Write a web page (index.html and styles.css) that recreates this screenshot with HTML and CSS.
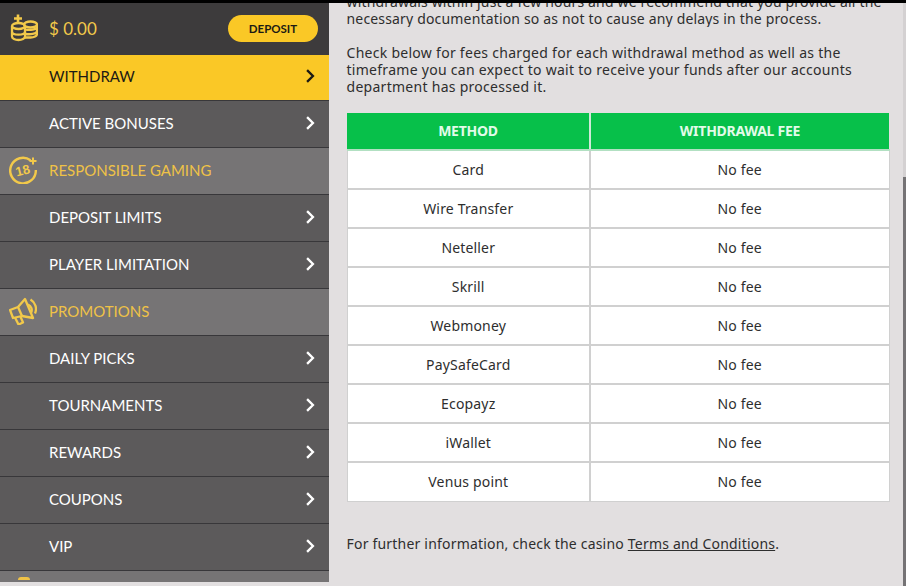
FILE: index.html
```html
<!DOCTYPE html>
<html lang="en">
<head>
<meta charset="utf-8">
<title>Withdraw</title>
<link rel="stylesheet" href="styles.css">
</head>
<body>
<div class="topbar"></div>
<div class="app">
  <aside class="sidebar">
    <div class="balance">
      <svg class="icon" viewBox="0 0 28 28" fill="none" stroke="#f2c94a" stroke-width="2.300"><path d="M4 4.500h8M8 .5v8" stroke-width="2.600"/><ellipse cx="8.500" cy="12" rx="6.500" ry="3"/><path d="M2 12v10.500c0 2 3 3.500 6.500 3.500s6.500-1.500 6.500-3.500V12M2 17.500c0 2 3 3.200 6.500 3.200s6.500-1.200 6.500-3.200"/><ellipse cx="20.500" cy="10.500" rx="6.500" ry="3"/><path d="M27 10.500V20c0 2-3 3.500-6.500 3.500H15M15.500 15.700c4 .6 11.500.3 11.500-3M15.500 20c4 .6 11.500.3 11.500-3"/></svg>
      <span class="amount">$ 0.00</span>
      <button class="deposit">DEPOSIT</button>
    </div>
    <a class="item active">WITHDRAW<svg class="chev" viewBox="0 0 8 12"><path d="M1.500 1l5 5-5 5"/></svg></a>
    <a class="item">ACTIVE BONUSES<svg class="chev" viewBox="0 0 8 12"><path d="M1.500 1l5 5-5 5"/></svg></a>
    <div class="section">
      <svg class="icon" viewBox="0 0 28 28" fill="none" stroke="#f2c94a" stroke-width="2.400"><path d="M21.500 4.200A12.800 12.800 0 1 0 26.800 14"/><path d="M24 1.500v7M20.500 5h7" stroke-width="2"/><text class="age" x="13.500" y="19" text-anchor="middle" transform="rotate(-14 13.500 14)">18</text></svg>
      <span>RESPONSIBLE GAMING</span>
    </div>
    <a class="item">DEPOSIT LIMITS<svg class="chev" viewBox="0 0 8 12"><path d="M1.500 1l5 5-5 5"/></svg></a>
    <a class="item">PLAYER LIMITATION<svg class="chev" viewBox="0 0 8 12"><path d="M1.500 1l5 5-5 5"/></svg></a>
    <div class="section">
      <svg class="icon" viewBox="0 0 28 28" fill="none" stroke="#f2c94a" stroke-width="2.300" stroke-linejoin="round"><path d="M1 13l8-3 7-8 8 19-11-2-9 2z"/><path d="M9 10l4 9"/><path d="M6 20.500L9.500 27.500 14 25.500 11.500 19.700"/><path d="M19 7.500a6 6 0 0 1 3 8.500M21.500 2.500a11 11 0 0 1 4.500 14"/></svg>
      <span>PROMOTIONS</span>
    </div>
    <a class="item">DAILY PICKS<svg class="chev" viewBox="0 0 8 12"><path d="M1.500 1l5 5-5 5"/></svg></a>
    <a class="item">TOURNAMENTS<svg class="chev" viewBox="0 0 8 12"><path d="M1.500 1l5 5-5 5"/></svg></a>
    <a class="item">REWARDS<svg class="chev" viewBox="0 0 8 12"><path d="M1.500 1l5 5-5 5"/></svg></a>
    <a class="item">COUPONS<svg class="chev" viewBox="0 0 8 12"><path d="M1.500 1l5 5-5 5"/></svg></a>
    <a class="item">VIP<svg class="chev" viewBox="0 0 8 12"><path d="M1.500 1l5 5-5 5"/></svg></a>
    <div class="section cut"><span class="peek"></span></div>
  </aside>
  <main class="content">
    <div class="clip">
      <p class="intro">withdrawals within just a few hours and we recommend that you provide all the necessary documentation so as not to cause any delays in the process.</p>
    </div>
    <p class="para">Check below for fees charged for each withdrawal method as well as the timeframe you can expect to wait to receive your funds after our accounts department has processed it.</p>
    <table class="fees">
      <thead><tr><th>METHOD</th><th>WITHDRAWAL FEE</th></tr></thead>
      <tbody>
        <tr><td>Card</td><td>No fee</td></tr>
        <tr><td>Wire Transfer</td><td>No fee</td></tr>
        <tr><td>Neteller</td><td>No fee</td></tr>
        <tr><td>Skrill</td><td>No fee</td></tr>
        <tr><td>Webmoney</td><td>No fee</td></tr>
        <tr><td>PaySafeCard</td><td>No fee</td></tr>
        <tr><td>Ecopayz</td><td>No fee</td></tr>
        <tr><td>iWallet</td><td>No fee</td></tr>
        <tr><td>Venus point</td><td>No fee</td></tr>
      </tbody>
    </table>
    <p class="further">For further information, check the casino <a class="terms">Terms and Conditions</a>.</p>
  </main>
  <div class="scrollbar"><div class="thumb"></div></div>
</div>
</body>
</html>
```

FILE: styles.css
```css
* { box-sizing: border-box; }
html, body { margin: 0; height: 586px; overflow: hidden; }
body { background: #e2dfe0; font-family: "Noto Sans", "Open Sans", sans-serif; color: #2e2e2e; }
.topbar { height: 3px; background: #000; position: absolute; inset: 0 0 auto 0; z-index: 2; }
.app { display: flex; height: 586px; }
.sidebar { width: 329px; flex: none; height: 582px; overflow: hidden; display: flex; flex-direction: column; font-family: Lato, sans-serif; font-size: 15px; background: #5c5a5b; }
.balance { height: 55px; flex: none; padding: 1px 11px 0 10px; background: #3d3b3c; display: flex; align-items: center; }
.icon { width: 28px; height: 28px; flex: none; }
.amount { margin-left: 11px; color: #f2c94a; font-size: 17px; }
.deposit { margin-left: auto; width: 90px; height: 27px; border: 0; border-radius: 14px; background: #fac826; color: #1c1a14; font-family: Lato, sans-serif; font-weight: 700; font-size: 11.500px; padding: 0; }
.item { height: 47px; flex: none; display: flex; align-items: center; justify-content: space-between; padding: 0 14px 3px 49px; color: #fff; background: #5c5a5b; border-bottom: 1px solid #38373a; }
.item.active { height: 46px; background: #fac826; color: #1c1a14; }
.chev { width: 10px; height: 14px; fill: none; stroke: #fff; stroke-width: 2; }
.active .chev { stroke: #1c1a14; }
.section { height: 47px; flex: none; display: flex; align-items: center; gap: 12px; padding: 0 0 3px 9px; color: #efc247; background: #767475; border-bottom: 1px solid #38373a; }
.age { font-family: "Liberation Sans", sans-serif; font-size: 13px; font-weight: 700; fill: #f2c94a; stroke: none; }
.cut { height: 14px; border: 0; align-items: flex-start; padding-left: 18px; }
.peek { width: 12px; height: 3px; background: #efc247; border-radius: 3px 3px 0 0; margin-top: 6px; }
.content { flex: 1; min-width: 0; padding: 0 16px 0 17.500px; font-size: 14px; line-height: 17px; letter-spacing: 0.17px; }
.clip { height: 27px; overflow: hidden; display: flex; flex-direction: column; justify-content: flex-end; }
.clip p { margin: 0; }
.para { margin: 17px 0 18px; letter-spacing: 0.28px; }
.fees { width: 543px; border-collapse: collapse; table-layout: fixed; }
.fees th { height: 37px; background: #07c04a; color: #e2fbe9; font-size: 14px; font-weight: 700; letter-spacing: -0.25px; border-left: 2px solid #cfe9d8; border-bottom: 2px solid #b2e0c2; padding: 0 0 2px; }
.fees th:first-child { border-left: 0; width: 243px; }
.fees td { height: 39px; background: #fff; text-align: center; border: 2px solid #d0d0d0; padding: 0 0 1px; }
.fees td:first-child { border-left: 1px solid #d0d0d0; }
.fees td:last-child { border-right: 1px solid #d0d0d0; }
.fees tr:last-child td { border-bottom: 1px solid #d0d0d0; }
.fees tr:first-child td { border-top: 0; }
.further { margin: 33px 0 0; letter-spacing: 0.2px; }
.terms { text-decoration: underline; }
.scrollbar { width: 3px; position: absolute; right: 0; top: 3px; bottom: 0; background: #d4d1d2; }
.thumb { position: absolute; top: 174px; bottom: 0; width: 3px; background: #757375; }
```
